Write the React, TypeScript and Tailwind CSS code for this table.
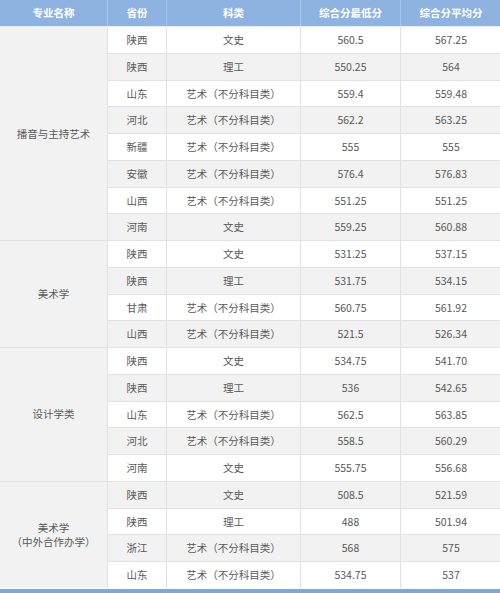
import React from "react";

type Row = { prov: string; subj: string; min: string; avg: string };

const ART = "艺术（不分科目类）";

const GROUPS: { name: string[]; rows: Row[] }[] = [
  {
    name: ["播音与主持艺术"],
    rows: [
      { prov: "陕西", subj: "文史", min: "560.5", avg: "567.25" },
      { prov: "陕西", subj: "理工", min: "550.25", avg: "564" },
      { prov: "山东", subj: ART, min: "559.4", avg: "559.48" },
      { prov: "河北", subj: ART, min: "562.2", avg: "563.25" },
      { prov: "新疆", subj: ART, min: "555", avg: "555" },
      { prov: "安徽", subj: ART, min: "576.4", avg: "576.83" },
      { prov: "山西", subj: ART, min: "551.25", avg: "551.25" },
      { prov: "河南", subj: "文史", min: "559.25", avg: "560.88" },
    ],
  },
  {
    name: ["美术学"],
    rows: [
      { prov: "陕西", subj: "文史", min: "531.25", avg: "537.15" },
      { prov: "陕西", subj: "理工", min: "531.75", avg: "534.15" },
      { prov: "甘肃", subj: ART, min: "560.75", avg: "561.92" },
      { prov: "山西", subj: ART, min: "521.5", avg: "526.34" },
    ],
  },
  {
    name: ["设计学类"],
    rows: [
      { prov: "陕西", subj: "文史", min: "534.75", avg: "541.70" },
      { prov: "陕西", subj: "理工", min: "536", avg: "542.65" },
      { prov: "山东", subj: ART, min: "562.5", avg: "563.85" },
      { prov: "河北", subj: ART, min: "558.5", avg: "560.29" },
      { prov: "河南", subj: "文史", min: "555.75", avg: "556.68" },
    ],
  },
  {
    name: ["美术学", "（中外合作办学）"],
    rows: [
      { prov: "陕西", subj: "文史", min: "508.5", avg: "521.59" },
      { prov: "陕西", subj: "理工", min: "488", avg: "501.94" },
      { prov: "浙江", subj: ART, min: "568", avg: "575" },
      { prov: "山东", subj: ART, min: "534.75", avg: "537" },
    ],
  },
];

const SPAN: Record<number, string> = {
  4: "row-span-4",
  5: "row-span-5",
  8: "row-span-8",
};

export default function App() {
  let index = 0;

  return (
    <div
      className="w-[500px] h-[593px] bg-white text-[10.5px] text-[#595959] overflow-hidden"
      style={{ fontFamily: '"Noto Sans CJK SC", "Noto Sans", sans-serif' }}
    >
      {/* Header */}
      <div className="grid grid-cols-[107px_58px_133px_99px_100px] gap-x-px h-[27px] bg-[#a9c6ea] border-b border-[#e6ecf4]">
        {["专业名称", "省份", "科类", "综合分最低分", "综合分平均分"].map((h) => (
          <div
            key={h}
            className="bg-[#8eb3e1] text-white font-bold flex items-center justify-center"
          >
            {h}
          </div>
        ))}
      </div>

      {/* Body */}
      <div className="grid grid-cols-[107px_58px_133px_99px_100px] auto-rows-[25.75px] gap-px bg-[#e2e2e2]">
        {GROUPS.map((g) => {
          const cells = g.rows.map((r, i) => {
            index += 1;
            const bg = index % 2 === 1 ? "bg-white" : "bg-[#f2f2f2]";
            return (
              <React.Fragment key={`${g.name[0]}-${i}`}>
                <div className={`${bg} col-start-2 flex items-center justify-center`}>{r.prov}</div>
                <div className={`${bg} flex items-center justify-center`}>{r.subj}</div>
                <div className={`${bg} flex items-center justify-center`}>{r.min}</div>
                <div className={`${bg} flex items-center justify-center`}>{r.avg}</div>
              </React.Fragment>
            );
          });
          return (
            <React.Fragment key={g.name.join("")}>
              <div
                className={`${SPAN[g.rows.length]} col-start-1 bg-[#f2f2f2] flex flex-col items-center justify-center leading-[14px]`}
              >
                {g.name.map((n) => (
                  <span key={n}>{n}</span>
                ))}
              </div>
              {cells}
            </React.Fragment>
          );
        })}
      </div>

      <div className="h-px bg-white" />
      <div className="h-[6px] bg-[#80a7d8]" />
    </div>
  );
}
